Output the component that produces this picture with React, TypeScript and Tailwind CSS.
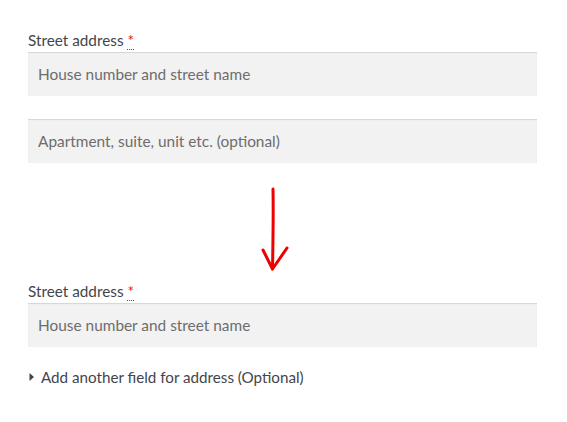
import React from 'react'

const Label = () => (
  <label className="block text-[15.3px] leading-[22px] text-[#43454b] mb-px">
    Street address{' '}
    <abbr className="text-[#ee1111] no-underline border-b border-dotted border-[#ee1111]" title="required">
      *
    </abbr>
  </label>
)

const Field = ({ placeholder }: { placeholder: string }) => (
  <input
    type="text"
    placeholder={placeholder}
    className="block w-full h-[44px] px-[10px] bg-[#f2f2f2] text-[15.4px] text-[#43454b] placeholder:text-[#6d6d6d] shadow-[inset_0_1px_1px_rgba(0,0,0,0.125)] outline-none"
  />
)

const App = () => {
  return (
    <div className="w-[567px] h-[422px] bg-white font-['Lato','Open_Sans',sans-serif]">
      <div className="pl-[28px] pt-[29px] w-[537px]">
        <Label />
        <Field placeholder="House number and street name" />
        <div className="mt-[23px]">
          <Field placeholder="Apartment, suite, unit etc. (optional)" />
        </div>

        <div className="h-[117px] flex">
          <svg width="40" height="117" viewBox="0 0 40 117" className="ml-[226px]">
            <path d="M19 26 C19.5 50 19 80 18.5 106" stroke="#ee0000" strokeWidth="3" fill="none" strokeLinecap="round" />
            <path d="M9 87 L18.5 106 L33 85" stroke="#ee0000" strokeWidth="3" fill="none" strokeLinecap="round" strokeLinejoin="round" />
          </svg>
        </div>

        <Label />
        <Field placeholder="House number and street name" />
        <div className="mt-[19px] flex items-center gap-[6px] text-[15.2px] leading-[22px] text-[#43454b]">
          <svg width="6" height="10" viewBox="0 0 6 10" className="ml-[1px]">
            <path d="M0.5 1 L5 5 L0.5 9 Z" fill="#43454b" />
          </svg>
          <span>Add another field for address (Optional)</span>
        </div>
      </div>
    </div>
  )
}

export default App
